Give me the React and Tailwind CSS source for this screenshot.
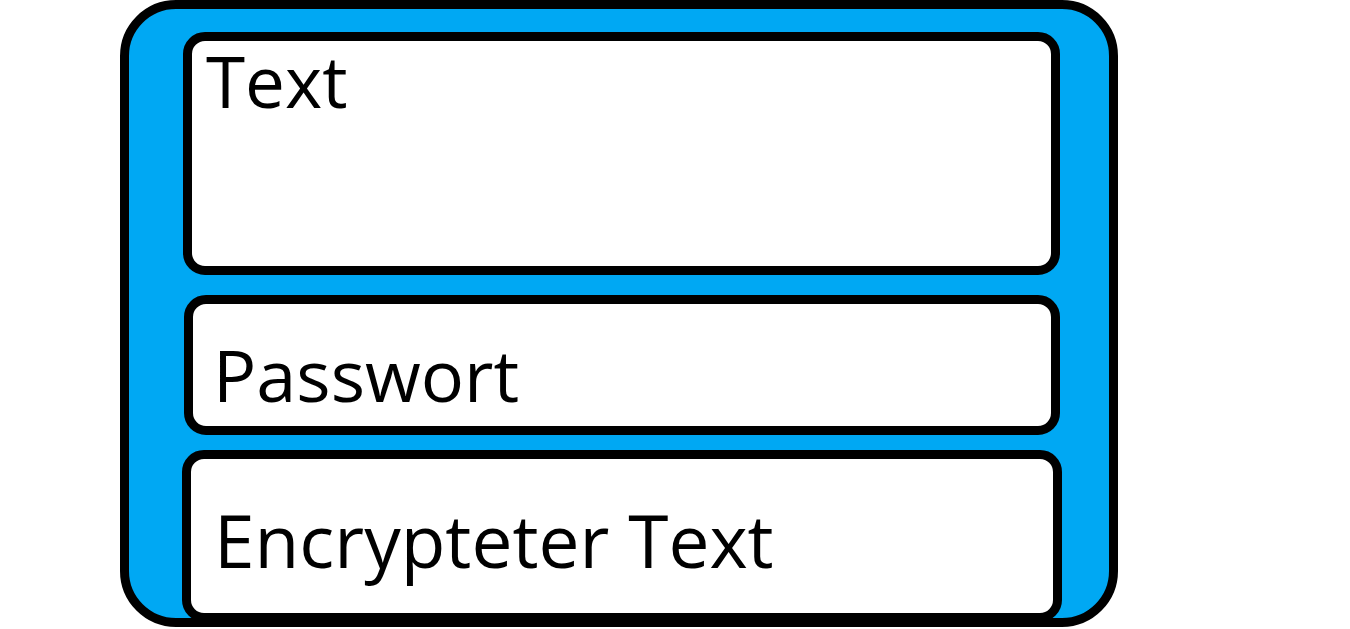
import React from 'react';

const Field = ({ label, className, textClass }) => (
  <div className={`shrink-0 bg-white border-[9px] border-black rounded-[22px] ${className}`}>
    <p className={`leading-none text-black ${textClass}`}>{label}</p>
  </div>
);

const App = () => {
  return (
    <div
      className="w-[1350px] h-[629px] bg-white overflow-hidden"
      style={{ fontFamily: '"Open Sans", "Noto Sans", sans-serif' }}
    >
      <div className="ml-[120px] w-[998px] h-[627px] bg-[#00a8f3] border-[9px] border-black rounded-[56px] flex flex-col items-start">
        <Field
          label="Text"
          className="ml-[54px] mt-[23px] w-[877px] h-[243px]"
          textClass="text-[71px] pl-[14px] pt-[4px]"
        />
        <Field
          label="Passwort"
          className="ml-[55px] mt-[20px] w-[876px] h-[140px]"
          textClass="text-[72px] pl-[20px] pt-[34px]"
        />
        <Field
          label="Encrypteter Text"
          className="ml-[53px] mt-[15px] w-[880px] h-[172px]"
          textClass="text-[73px] pl-[23px] pt-[44px]"
        />
      </div>
    </div>
  );
};

export default App;
